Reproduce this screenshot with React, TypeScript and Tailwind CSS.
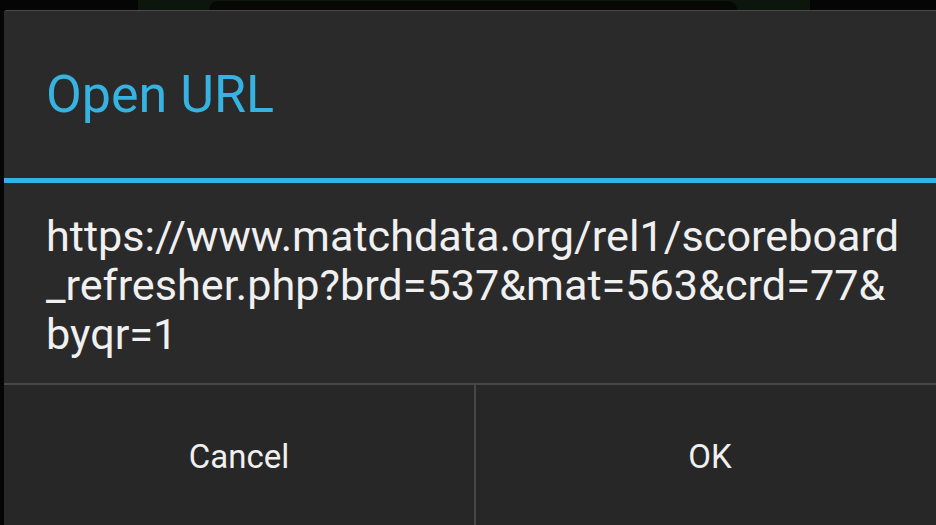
const URL_LINES = [
  'https://www.matchdata.org/rel1/scoreboard',
  '_refresher.php?brd=537&mat=563&crd=77&',
  'byqr=1',
]

export default function App() {
  return (
    <div
      className="w-[936px] h-[525px] overflow-hidden bg-[#050505] flex flex-col"
      style={{ fontFamily: 'Roboto, "Noto Sans", sans-serif' }}
    >
      {/* Screen behind the dialog */}
      <div className="h-[10px] shrink-0 flex">
        <div className="w-[138px] bg-[#050505]" />
        <div className="w-[672px] bg-[#0c160c] flex">
          <div className="ml-[71px] w-[528px] mt-[1px] rounded-t-[14px] bg-[#070707]" />
        </div>
        <div className="flex-1 bg-[#050505]" />
      </div>

      {/* Dialog */}
      <div className="ml-[4px] w-[940px] flex-1 flex flex-col rounded-tl-[3px] border-t border-[#4a4a4a] bg-[#2a2a2a]">
        {/* Title */}
        <div className="h-[167px] shrink-0 flex items-center pl-[42px]">
          <span className="text-[52px] leading-none text-[#36b3e0]">Open URL</span>
        </div>
        <div className="h-[5px] shrink-0 bg-[#33b3e3]" />

        {/* Message */}
        <div className="h-[200px] shrink-0 pl-[42px] pt-[29px]">
          {URL_LINES.map((line) => (
            <div key={line} className="text-[43.2px] leading-[49px] text-[#f0f0f0] whitespace-nowrap">
              {line}
            </div>
          ))}
        </div>

        {/* Buttons */}
        <div className="h-[2px] shrink-0 bg-[#474747]" />
        <div className="flex-1 flex bg-[#272727]">
          <button className="w-[470px] h-[144px] flex items-center justify-center text-[33px] text-[#f0f0f0]">
            Cancel
          </button>
          <div className="w-[2px] bg-[#474747]" />
          <button className="flex-1 h-[144px] flex items-center justify-center text-[33px] text-[#f0f0f0]">
            OK
          </button>
        </div>
      </div>
    </div>
  )
}
